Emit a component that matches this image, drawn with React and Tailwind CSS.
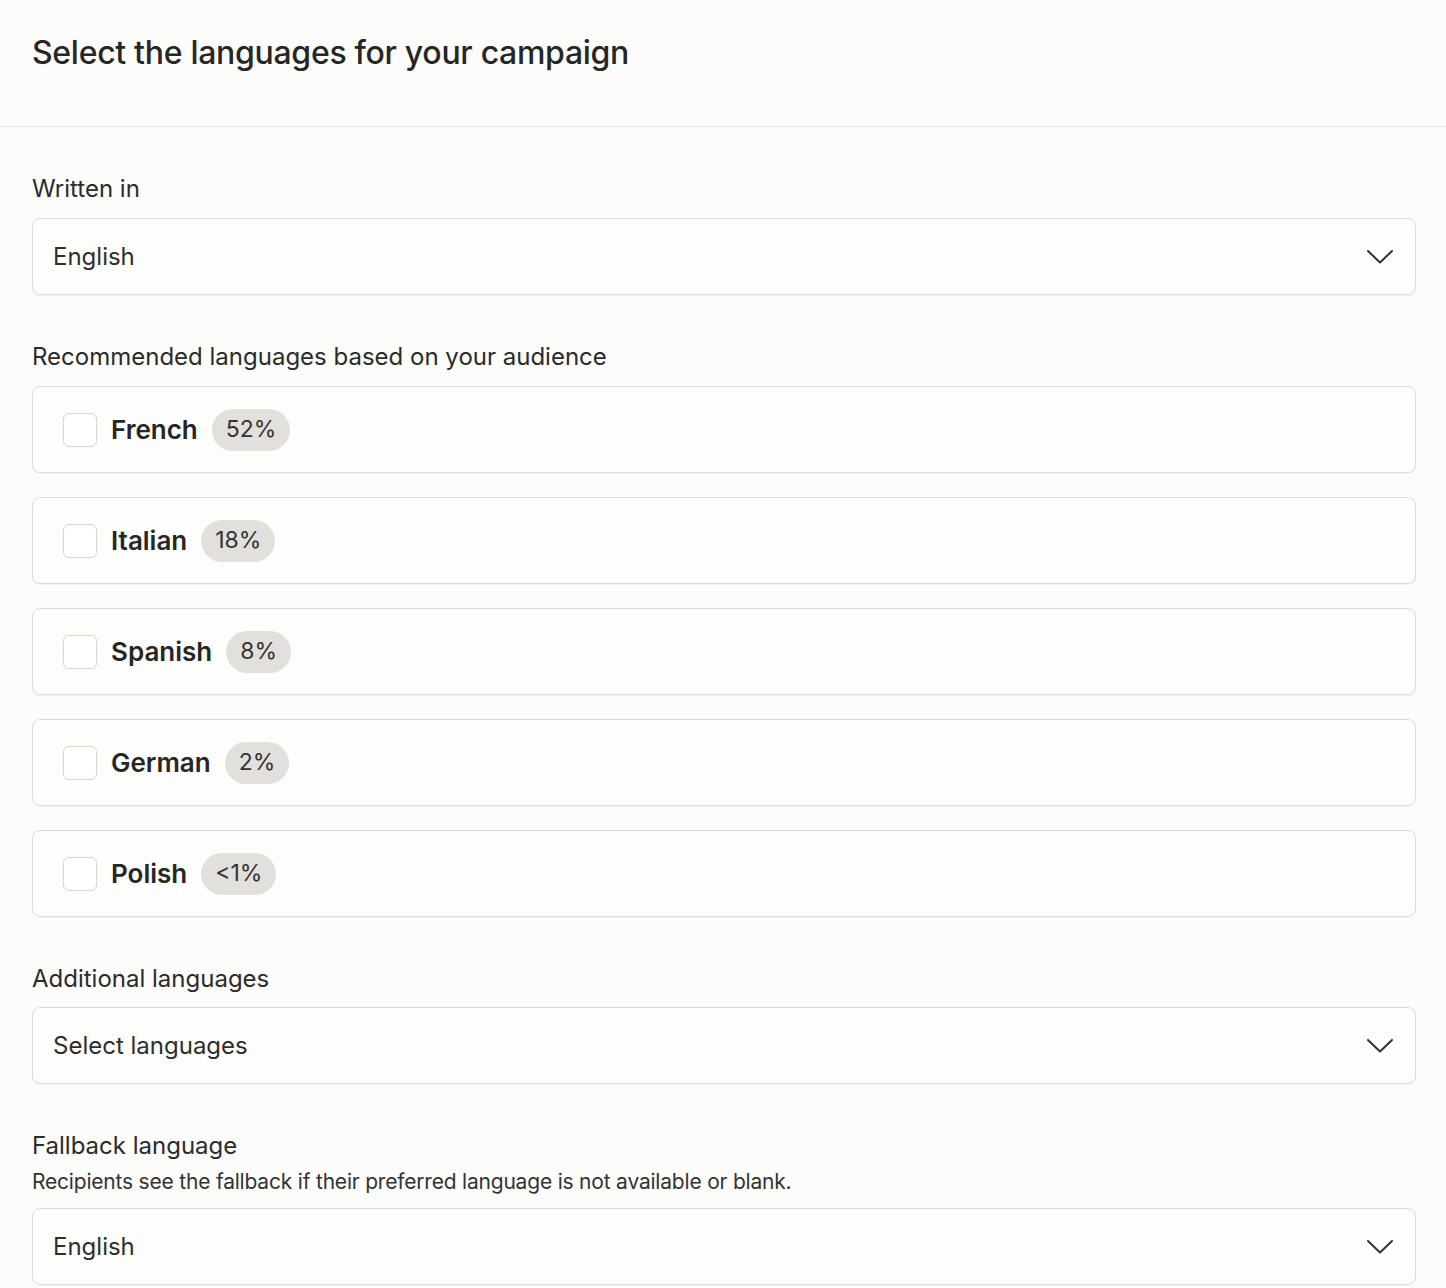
const langs = [
  { name: 'French', pct: '52%' },
  { name: 'Italian', pct: '18%' },
  { name: 'Spanish', pct: '8%' },
  { name: 'German', pct: '2%' },
  { name: 'Polish', pct: '<1%' },
];

const Chevron = () => (
  <svg width="28" height="16" viewBox="0 0 28 16" fill="none" className="text-[#333]">
    <path d="M2 2 L14 13.5 L26 2" stroke="currentColor" strokeWidth="2" strokeLinecap="round" strokeLinejoin="round" />
  </svg>
);

const SelectBox = ({ value }) => (
  <div className="flex items-center justify-between h-[77px] pl-5 pr-[21px] bg-[#fdfdfb] border border-[#dcdcda] rounded-lg shadow-[0_1px_1px_rgba(0,0,0,0.04)]">
    <span className="text-[24px] text-[#2e2e2e]">{value}</span>
    <Chevron />
  </div>
);

const LangRow = ({ name, pct }) => (
  <div className="flex items-center h-[87px] pl-[30px] bg-[#fdfdfb] border border-[#dcdcda] rounded-lg shadow-[0_1px_1px_rgba(0,0,0,0.04)]">
    <div className="w-[34px] h-[34px] rounded-[6px] border border-[#d6d6d4] bg-white" />
    <span className="ml-[14px] text-[26px] font-semibold text-[#262626]">{name}</span>
    <span className="ml-[14px] h-[42px] px-[14px] flex items-center rounded-full bg-[#e2e0dd] text-[23px] text-[#333]">
      {pct}
    </span>
  </div>
);

const App = () => {
  return (
    <div
      className="min-h-screen bg-[#fcfcfa] text-[#2b2b2b]"
      style={{ fontFamily: 'Inter, "Noto Sans", sans-serif' }}
    >
      <div className="h-[127px] px-8 pt-[34px] border-b border-[#e2e2e0]">
        <h1 className="text-[32px] leading-[38px] font-medium tracking-[-0.3px] text-[#262626]">
          Select the languages for your campaign
        </h1>
      </div>

      <div className="px-8 pr-[30px] pt-[46px]">
        <p className="text-[24px] leading-[32px]">Written in</p>
        <div className="mt-[13px]">
          <SelectBox value="English" />
        </div>

        <p className="mt-[46px] text-[24px] leading-[32px]">
          Recommended languages based on your audience
        </p>
        <div className="mt-[13px] flex flex-col gap-6">
          {langs.map((l) => (
            <LangRow key={l.name} name={l.name} pct={l.pct} />
          ))}
        </div>

        <p className="mt-[46px] text-[24px] leading-[32px]">Additional languages</p>
        <div className="mt-[12px]">
          <SelectBox value="Select languages" />
        </div>

        <p className="mt-[46px] text-[24px] leading-[32px]">Fallback language</p>
        <p className="mt-[6px] text-[21px] leading-[28px] tracking-[-0.2px] text-[#333]">
          Recipients see the fallback if their preferred language is not available or blank.
        </p>
        <div className="mt-[12px]">
          <SelectBox value="English" />
        </div>
      </div>
    </div>
  );
};

export default App;
